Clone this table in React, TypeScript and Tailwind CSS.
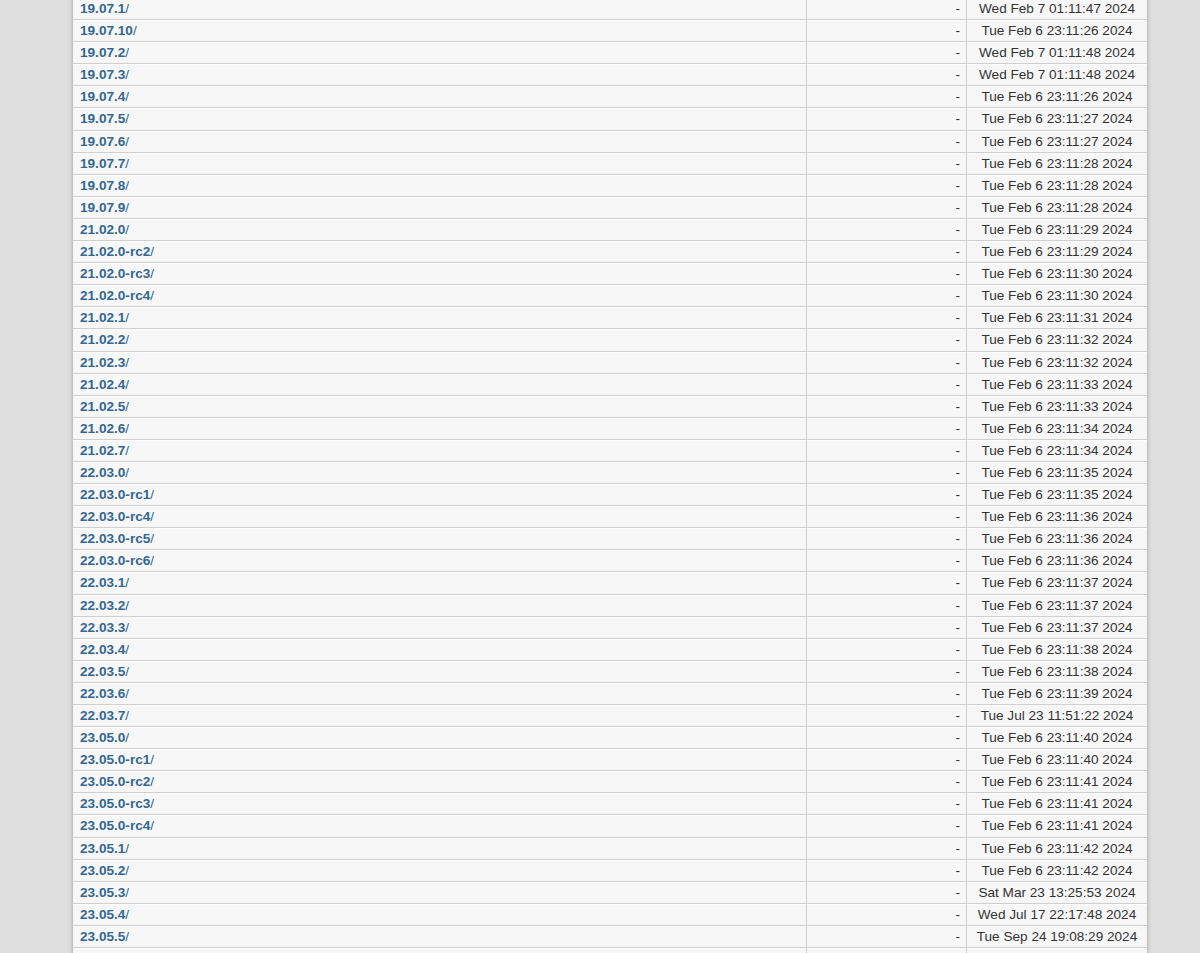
import React from 'react';

type Entry = { name: string; date: string };

const entries: Entry[] = [
    { name: '19.07.1', date: 'Wed Feb 7 01:11:47 2024' },
    { name: '19.07.10', date: 'Tue Feb 6 23:11:26 2024' },
    { name: '19.07.2', date: 'Wed Feb 7 01:11:48 2024' },
    { name: '19.07.3', date: 'Wed Feb 7 01:11:48 2024' },
    { name: '19.07.4', date: 'Tue Feb 6 23:11:26 2024' },
    { name: '19.07.5', date: 'Tue Feb 6 23:11:27 2024' },
    { name: '19.07.6', date: 'Tue Feb 6 23:11:27 2024' },
    { name: '19.07.7', date: 'Tue Feb 6 23:11:28 2024' },
    { name: '19.07.8', date: 'Tue Feb 6 23:11:28 2024' },
    { name: '19.07.9', date: 'Tue Feb 6 23:11:28 2024' },
    { name: '21.02.0', date: 'Tue Feb 6 23:11:29 2024' },
    { name: '21.02.0-rc2', date: 'Tue Feb 6 23:11:29 2024' },
    { name: '21.02.0-rc3', date: 'Tue Feb 6 23:11:30 2024' },
    { name: '21.02.0-rc4', date: 'Tue Feb 6 23:11:30 2024' },
    { name: '21.02.1', date: 'Tue Feb 6 23:11:31 2024' },
    { name: '21.02.2', date: 'Tue Feb 6 23:11:32 2024' },
    { name: '21.02.3', date: 'Tue Feb 6 23:11:32 2024' },
    { name: '21.02.4', date: 'Tue Feb 6 23:11:33 2024' },
    { name: '21.02.5', date: 'Tue Feb 6 23:11:33 2024' },
    { name: '21.02.6', date: 'Tue Feb 6 23:11:34 2024' },
    { name: '21.02.7', date: 'Tue Feb 6 23:11:34 2024' },
    { name: '22.03.0', date: 'Tue Feb 6 23:11:35 2024' },
    { name: '22.03.0-rc1', date: 'Tue Feb 6 23:11:35 2024' },
    { name: '22.03.0-rc4', date: 'Tue Feb 6 23:11:36 2024' },
    { name: '22.03.0-rc5', date: 'Tue Feb 6 23:11:36 2024' },
    { name: '22.03.0-rc6', date: 'Tue Feb 6 23:11:36 2024' },
    { name: '22.03.1', date: 'Tue Feb 6 23:11:37 2024' },
    { name: '22.03.2', date: 'Tue Feb 6 23:11:37 2024' },
    { name: '22.03.3', date: 'Tue Feb 6 23:11:37 2024' },
    { name: '22.03.4', date: 'Tue Feb 6 23:11:38 2024' },
    { name: '22.03.5', date: 'Tue Feb 6 23:11:38 2024' },
    { name: '22.03.6', date: 'Tue Feb 6 23:11:39 2024' },
    { name: '22.03.7', date: 'Tue Jul 23 11:51:22 2024' },
    { name: '23.05.0', date: 'Tue Feb 6 23:11:40 2024' },
    { name: '23.05.0-rc1', date: 'Tue Feb 6 23:11:40 2024' },
    { name: '23.05.0-rc2', date: 'Tue Feb 6 23:11:41 2024' },
    { name: '23.05.0-rc3', date: 'Tue Feb 6 23:11:41 2024' },
    { name: '23.05.0-rc4', date: 'Tue Feb 6 23:11:41 2024' },
    { name: '23.05.1', date: 'Tue Feb 6 23:11:42 2024' },
    { name: '23.05.2', date: 'Tue Feb 6 23:11:42 2024' },
    { name: '23.05.3', date: 'Sat Mar 23 13:25:53 2024' },
    { name: '23.05.4', date: 'Wed Jul 17 22:17:48 2024' },
    { name: '23.05.5', date: 'Tue Sep 24 19:08:29 2024' },
];

const Row = ({ entry }: { entry?: Entry }) => (
    <div className="grid grid-cols-[734px_160px_180px] h-[22.1px] border-b border-[#cfcfcf] shadow-[inset_0_1px_0_#fdfdfd] text-[13.6px] leading-[21px]">
        <div className="pl-[7px] border-r border-[#cfcfcf]">
            {entry && (
                <a href="#" className="text-[#336791] no-underline">
                    <b>{entry.name}</b>/
                </a>
            )}
        </div>
        <div className="pr-[6px] text-right text-[#333] border-r border-[#cfcfcf]">{entry ? '-' : ''}</div>
        <div className="text-center text-[#333]">{entry?.date}</div>
    </div>
);

export default function App() {
    return (
        <div className="h-[953px] overflow-hidden bg-[#dedede]" style={{ fontFamily: '"Liberation Sans", Arial, sans-serif' }}>
            <div className="ml-[73px] w-[1074px] -mt-[2px] bg-[#f7f7f7] shadow-[0_0_4px_#9a9a9a]">
                {entries.map((e) => (
                    <Row key={e.name} entry={e} />
                ))}
                <Row />
            </div>
        </div>
    );
}
